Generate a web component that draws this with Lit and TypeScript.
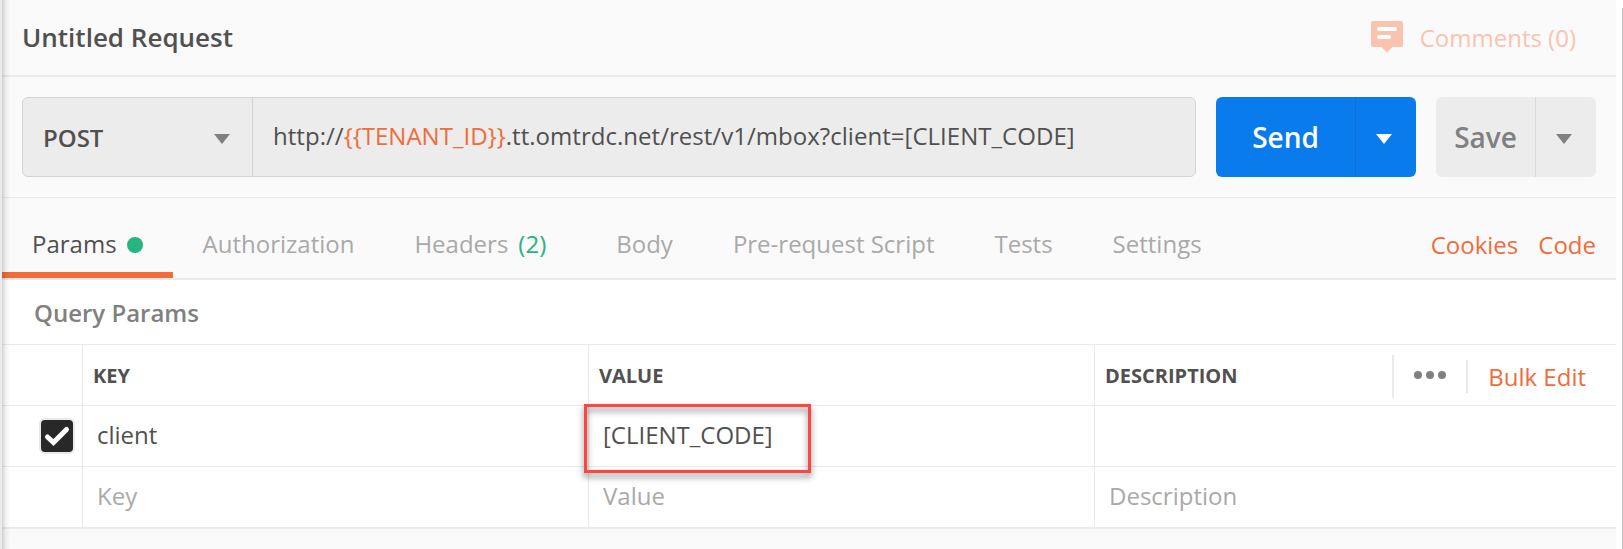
import { LitElement, html, css, svg } from "lit";
import { customElement } from "lit/decorators.js";
import { classMap } from "lit/directives/class-map.js";

interface Tab {
  label: string;
  count?: string;
  active?: boolean;
}

const TABS: Tab[] = [
  { label: "Params", active: true },
  { label: "Authorization" },
  { label: "Headers", count: "(2)" },
  { label: "Body" },
  { label: "Pre-request Script" },
  { label: "Tests" },
  { label: "Settings" },
];

const caret = html`<svg class="caret" width="16" height="10" viewBox="0 0 16 10">
  ${svg`<path d="M0 0H16L8 10Z" fill="currentColor" />`}
</svg>`;

@customElement("app-root")
export class AppRoot extends LitElement {
  static styles = css`
    :host {
      display: flex;
      position: relative;
      box-sizing: border-box;
      width: 1623px;
      height: 549px;
      overflow: hidden;
      background: #fff;
      color: #505050;
      font: 24px/32px "Open Sans", "Noto Sans", sans-serif;
    }
    * { box-sizing: border-box; }
    svg { display: block; flex: none; }
    .edge { flex: none; width: 2px; background: #ebebeb; }
    .shade {
      position: absolute;
      left: 2px;
      top: 0;
      width: 8px;
      height: 100%;
      background: linear-gradient(90deg, rgba(0, 0, 0, 0.17), rgba(0, 0, 0, 0.06) 45%, transparent);
    }
    .panel { width: 1614px; display: flex; flex-direction: column; background: #fafafa; }
    .rail { flex: none; width: 1px; margin: 8px 0 0 6px; background: #bcbcbc; }

    .header {
      height: 77px;
      flex: none;
      display: flex;
      align-items: center;
      justify-content: space-between;
      padding: 0 40px 0 20px;
      border-bottom: 2px solid #eaeaea;
    }
    .title { font-size: 26px; font-weight: 600; padding-bottom: 2px; }
    .comments { display: flex; align-items: center; gap: 17px; color: #f9c3b0; padding-top: 1px; }
    .comments svg { margin-bottom: 2px; }

    .request {
      height: 121px;
      flex: none;
      display: flex;
      gap: 20px;
      padding: 20px;
      border-bottom: 1px solid #eaeaea;
    }
    .address {
      flex: 1;
      display: flex;
      border: 1px solid #d4d4d4;
      border-radius: 6px;
      background: #ececec;
    }
    .method {
      width: 230px;
      display: flex;
      align-items: center;
      justify-content: space-between;
      padding: 3px 22px 0 20px;
      border-right: 1px solid #d4d4d4;
      font-weight: 600;
    }
    .method span { padding-bottom: 2px; }
    .caret { color: #808080; }
    .url { padding: 22px 20px 0; white-space: pre; letter-spacing: 0.03px; }
    .variable { color: #f26b3a; }
    .button {
      display: flex;
      border-radius: 6px;
      font-size: 28px;
      font-weight: 600;
    }
    .send { width: 200px; background: #097bed; color: #fff; }
    .save { width: 160px; background: #ececec; color: #808080; }
    .main { flex: 1; display: flex; align-items: center; justify-content: center; }
    .drop { width: 61px; display: flex; align-items: center; justify-content: center; padding: 3px 4px 0 0; }
    .send .drop { border-left: 1px solid #0f6fd4; }
    .save .drop { border-left: 1px solid #d9d9d9; }
    .send .caret { color: #fff; }

    .tabs {
      height: 82px;
      flex: none;
      display: flex;
      border-bottom: 2px solid #eaeaea;
      color: #a9a9a9;
    }
    .tab {
      display: flex;
      align-items: center;
      gap: 10px;
      padding: 18px 30px 0;
      border-bottom: 6px solid transparent;
      white-space: nowrap;
    }
    .active { color: #505050; border-color: #f26b3a; }
    .dot { width: 16px; height: 16px; margin-top: 2px; border-radius: 50%; background: #26b47f; }
    .count { color: #26b47f; margin-right: 10px; }
    .links { margin-left: auto; display: flex; gap: 20px; padding: 31px 20px 0 0; color: #f26b3a; }

    .section {
      height: 64px;
      flex: none;
      padding: 17px 32px;
      background: #fff;
      color: #808080;
      font-weight: 600;
    }
    .grid {
      display: grid;
      flex: none;
      grid-template-columns: 80px 506px 506px 1fr;
      grid-auto-rows: 61px;
      background: #fff;
      border-bottom: 2px solid #eaeaea;
    }
    .cell {
      display: flex;
      align-items: center;
      border-top: 1px solid #eaeaea;
      border-left: 1px solid #eaeaea;
      padding: 0 14px 2px;
    }
    .check { border-left: 0; justify-content: flex-end; padding: 0 7px 0 0; }
    .head { padding: 2px 10px 0; font-size: 20px; font-weight: 700; }
    .placeholder { color: #a9a9a9; }
    .box {
      display: flex;
      width: 36px;
      height: 36px;
      border: 2px solid #eaeaea;
      border-radius: 6px;
      background: #282828;
    }
    .last { padding: 0 30px 0 10px; }
    .grow { flex: 1; padding-top: 2px; }
    .tools { display: flex; align-items: center; font-size: 24px; font-weight: 400; color: #f26b3a; }
    .bar { width: 2px; background: #eaeaea; }
    .tall { height: 43px; margin-top: 2px; }
    .short { height: 33px; margin-right: 20px; margin-top: 3px; }
    .more { margin: 0 20px; color: #808080; }
    .bulk { padding-top: 3px; }
    .callout {
      position: absolute;
      left: 584px;
      top: 404px;
      width: 227px;
      height: 69px;
      border: 3px solid #ff4444;
      filter: drop-shadow(0 4px 3px rgba(0, 0, 0, 0.5));
    }
  `;

  private renderTab(tab: Tab) {
    return html`<div class=${classMap({ tab: true, active: !!tab.active })}>
      <span>${tab.label}</span>
      ${tab.active ? html`<span class="dot"></span>` : null}
      ${tab.count ? html`<span class="count">${tab.count}</span>` : null}
    </div>`;
  }

  render() {
    return html`
      <div class="edge"></div>
      <div class="panel">
        <div class="header">
          <div class="title">Untitled Request</div>
          <div class="comments">
            <svg width="32" height="32" viewBox="0 0 32 32">
              <path fill="currentColor" d="M2 0H30Q32 0 32 2V24Q32 26 30 26H21.500L16 31.500L10.500 26H2Q0 26 0 24V2Q0 0 2 0Z" />
              <path d="M8 8H24M8 16H18" stroke="#fff" stroke-width="4" stroke-linecap="round" />
            </svg>
            <span>Comments (0)</span>
          </div>
        </div>

        <div class="request">
          <div class="address">
            <div class="method"><span>POST</span>${caret}</div>
            <div class="url">http://<span class="variable">{{TENANT_ID}}</span>.tt.omtrdc.net/rest/v1/mbox?client=[CLIENT_CODE]</div>
          </div>
          <div class="button send">
            <div class="main">Send</div>
            <div class="drop">${caret}</div>
          </div>
          <div class="button save">
            <div class="main">Save</div>
            <div class="drop">${caret}</div>
          </div>
        </div>

        <div class="tabs">
          ${TABS.map((t) => this.renderTab(t))}
          <div class="links"><span>Cookies</span><span>Code</span></div>
        </div>

        <div class="section">Query Params</div>
        <div class="grid">
          <div class="cell check"></div>
          <div class="cell head">KEY</div>
          <div class="cell head">VALUE</div>
          <div class="cell head last">
            <span class="grow">DESCRIPTION</span>
            <div class="tools">
              <div class="bar tall"></div>
              <svg class="more" width="32" height="8" viewBox="0 0 32 8" fill="currentColor">
                <circle cx="4" cy="4" r="4" /><circle cx="16" cy="4" r="4" /><circle cx="28" cy="4" r="4" />
              </svg>
              <div class="bar short"></div>
              <span class="bulk">Bulk Edit</span>
            </div>
          </div>

          <div class="cell check">
            <div class="box">
              <svg width="32" height="32" viewBox="0 0 32 32">
                <path d="M6.500 17L12.500 22.500L25.500 9.500" fill="none" stroke="#fff" stroke-width="5" stroke-linecap="round" />
              </svg>
            </div>
          </div>
          <div class="cell">client</div>
          <div class="cell">[CLIENT_CODE]</div>
          <div class="cell"></div>

          <div class="cell check"></div>
          <div class="cell placeholder">Key</div>
          <div class="cell placeholder">Value</div>
          <div class="cell placeholder">Description</div>
        </div>
      </div>
      <div class="rail"></div>
      <div class="shade"></div>
      <div class="callout"></div>
    `;
  }
}
